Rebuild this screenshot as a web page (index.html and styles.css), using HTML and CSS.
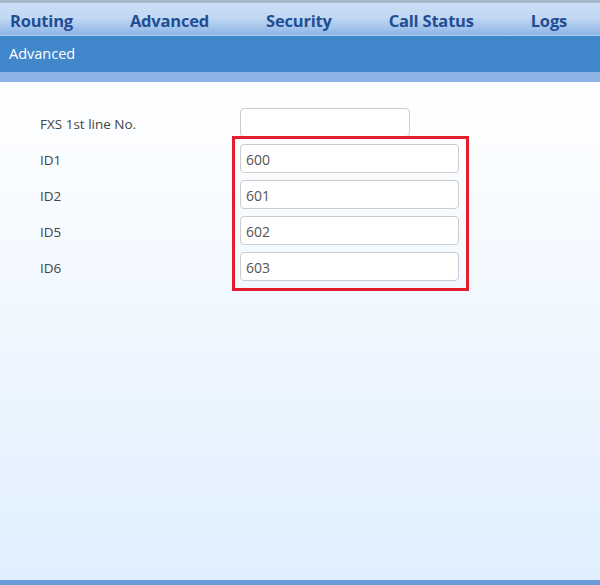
FILE: index.html
```html
<!DOCTYPE html>
<html>
<head>
<meta charset="utf-8">
<link rel="stylesheet" href="styles.css">
</head>
<body>
<div class="page">
  <nav class="nav">
    <span class="nav-item">Routing</span>
    <span class="nav-item">Advanced</span>
    <span class="nav-item">Security</span>
    <span class="nav-item">Call Status</span>
    <span class="nav-item">Logs</span>
  </nav>
  <div class="crumb">Advanced</div>
  <div class="subbar"></div>
  <main class="content">
    <div class="form">
      <label class="lbl">FXS 1st line No.</label>
      <div class="cell"><input class="inp short" type="text" value=""></div>
      <label class="lbl">ID1</label>
      <div class="cell"><input class="inp" type="text" value="600"></div>
      <label class="lbl">ID2</label>
      <div class="cell"><input class="inp" type="text" value="601"></div>
      <label class="lbl">ID5</label>
      <div class="cell"><input class="inp" type="text" value="602"></div>
      <label class="lbl">ID6</label>
      <div class="cell"><input class="inp" type="text" value="603"></div>
    </div>
    <div class="highlight"></div>
  </main>
  <div class="footer"></div>
</div>
</body>
</html>
```
FILE: styles.css
```css
* { box-sizing: border-box; }
html, body { margin: 0; padding: 0; }
body {
  width: 600px;
  height: 585px;
  overflow: hidden;
  font-family: "Open Sans", "Noto Sans", sans-serif;
}
.page {
  display: flex;
  flex-direction: column;
  height: 585px;
}
.nav {
  height: 36px;
  flex: none;
  display: flex;
  align-items: center;
  gap: 57px;
  padding: 3px 0 0 10px;
  border-top: 3px solid #a8b8cc;
  border-bottom: 1px solid #b4cdee;
  background: linear-gradient(#c9ddf5 0%, #c3d8f3 45%, #8db5e7 100%);
}
.nav-item {
  font-weight: 700;
  font-size: 16.5px;
  color: #1f4e93;
  letter-spacing: -0.2px;
}
.crumb {
  height: 36px;
  flex: none;
  background: #4187cc;
  color: #fff;
  font-size: 14.5px;
  padding: 0 0 2px 9px;
  display: flex;
  align-items: center;
}
.subbar {
  height: 10px;
  flex: none;
  background: #8cb4e6;
}
.content {
  position: relative;
  flex: 1;
  background: linear-gradient(#ffffff 0%, #e0efff 100%);
  padding: 22px 0 0 40px;
}
.form {
  display: grid;
  grid-template-columns: 200px 219px;
  grid-auto-rows: 36px;
}
.lbl {
  display: flex;
  align-items: center;
  padding-top: 4px;
  font-size: 13.5px;
  color: #444;
}
.cell {
  display: flex;
  align-items: center;
}
.inp {
  width: 219px;
  height: 29px;
  border: 1px solid #cccccc;
  border-radius: 4px;
  background: #fff;
  padding: 2px 5px 0;
  font-family: "Open Sans", "Noto Sans", sans-serif;
  font-size: 14px;
  color: #555;
  outline: none;
}
.inp.short { width: 170px; }
.highlight {
  position: absolute;
  left: 232px;
  top: 54px;
  width: 237px;
  height: 155px;
  border: 3px solid #e41e2b;
}
.footer {
  height: 5px;
  flex: none;
  background: #6a9ad8;
}
```
